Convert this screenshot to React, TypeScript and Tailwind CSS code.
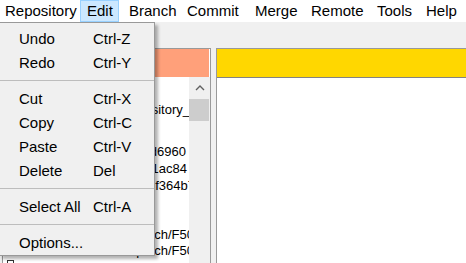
import React from "react";

const menuBar = [
  { label: "Repository", box: "w-[80px] pl-[4px]" },
  { label: "Edit", box: "w-[39px] pl-[6px] bg-[#cce8ff] border border-[#99d1ff]", active: true },
  { label: "Branch", box: "w-[60px] pl-[9px]" },
  { label: "Commit", box: "w-[68px] pl-[7px]" },
  { label: "Merge", box: "w-[56px] pl-[7px]" },
  { label: "Remote", box: "w-[66px] pl-[7px]" },
  { label: "Tools", box: "w-[49px] pl-[7px]" },
  { label: "Help", box: "w-[48px] pl-[7px]" },
];

type Entry = { label: string; keys: string } | "sep";

const editMenu: Entry[] = [
  { label: "Undo", keys: "Ctrl-Z" },
  { label: "Redo", keys: "Ctrl-Y" },
  "sep",
  { label: "Cut", keys: "Ctrl-X" },
  { label: "Copy", keys: "Ctrl-C" },
  { label: "Paste", keys: "Ctrl-V" },
  { label: "Delete", keys: "Del" },
  "sep",
  { label: "Select All", keys: "Ctrl-A" },
  "sep",
  { label: "Options...", keys: "" },
];

// rows of the repository tree; text runs under the scrollbar and gets clipped
const rows = [
  { text: "", h: "h-[17px]" },
  { text: "repository_", h: "h-[17px]", end: "mr-[-1px]" },
  { text: "", h: "h-[25px]" },
  { text: "c2d6960", h: "h-[17px]", end: "mr-[3px]" },
  { text: "b1ac84", h: "h-[17px]", end: "mr-[2px]" },
  { text: "2f364b7", h: "h-[18px]", end: "mr-[-6px]" },
  { text: "", h: "h-[31px]" },
  { text: "branch/F50", h: "h-[16px]", end: "mr-[-5px]" },
  { text: "patch/F50", h: "h-[17px]", end: "mr-[-5px]" },
];

export default function App() {
  return (
    <div className="w-[466px] h-[263px] relative overflow-hidden bg-[#f0f0f0] font-['Liberation_Sans',Arial,sans-serif] text-black">
      <div className="h-[22px] bg-white flex text-[15px] leading-[20px] whitespace-nowrap">
        {menuBar.map((m) => (
          <div key={m.label} className={`h-[22px] ${m.box} ${m.active ? "" : "border border-transparent"}`}>
            {m.label}
          </div>
        ))}
      </div>

      <div className="flex pt-[26px] pl-[2px]">
        <div className="w-[209px] h-[230px] border border-[#999] bg-white flex flex-col">
          <div className="h-[28px] bg-[#ffa07a] border-r border-white" />
          <div className="flex flex-1">
            <div className="flex-1 overflow-hidden pt-[7px] text-[13px] leading-[17px]">
              {rows.map((r, i) => (
                <div key={i} className={`${r.h} flex justify-end whitespace-nowrap`}>
                  {r.text && <span className={r.end}>{r.text}</span>}
                </div>
              ))}
              <div className="pl-[4px] pt-[1px]">
                <div className="w-[7px] h-[7px] border border-[#333]" />
              </div>
            </div>
            <div className="w-[21px] bg-[#f0f0f0] flex flex-col">
              <div className="h-[21px] flex items-center justify-center">
                <svg width="10" height="6" viewBox="0 0 10 6" fill="none">
                  <path d="M1 5 L5 1 L9 5" stroke="#606060" strokeWidth="1.4" />
                </svg>
              </div>
              <div className="mt-[1px] w-[20px] h-[22px] bg-[#cdcdcd]" />
            </div>
          </div>
        </div>

        <div className="ml-[5px] flex-1 h-[230px] border-l border-t border-[#999] bg-white">
          <div className="h-[29px] bg-[#ffd700] border-b border-[#828282]" />
        </div>
      </div>

      <div className="absolute left-[-1px] top-[22px] w-[156px] bg-[#f0f0f0] border border-[#999] shadow-[3px_3px_3px_rgba(0,0,0,0.3)] pt-[4px] text-[15px]">
        {editMenu.map((e, i) =>
          e === "sep" ? (
            <div key={i} className="h-[12px] pt-[5px]">
              <div className="h-px bg-[#bdbdbd]" />
            </div>
          ) : (
            <div key={i} className="h-[24px] flex items-center pl-[19px] whitespace-nowrap">
              <span className="w-[74px]">{e.label}</span>
              <span>{e.keys}</span>
            </div>
          )
        )}
      </div>
    </div>
  );
}
